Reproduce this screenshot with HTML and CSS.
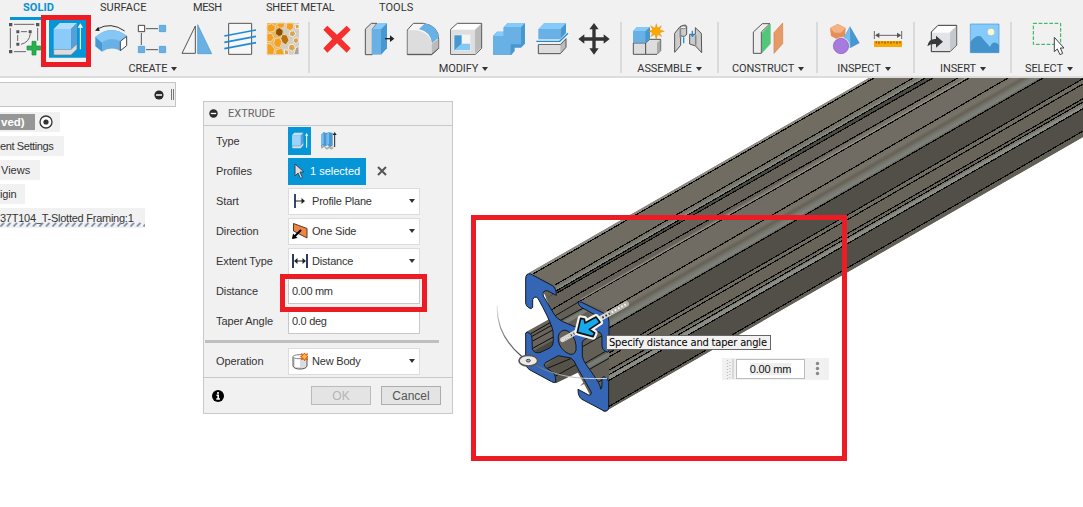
FILE: index.html
```
<!DOCTYPE html>
<html lang="en">
<head>
<meta charset="utf-8">
<title>Extrude</title>
<link rel="stylesheet" href="styles.css">
</head>
<body>
<header class="toolbar">
  <nav class="tabs">
    <span class="tab tab-active">SOLID</span><span class="tab tab-surface">SURFACE</span><span class="tab tab-mesh">MESH</span><span class="tab tab-sheet">SHEET METAL</span><span class="tab tab-tools">TOOLS</span>
  </nav>
  <div class="groups">
    <section class="group create">
      <div class="icons">
        <svg width="41" height="42" viewBox="0 60 123 126"><path d="M42 73h61M42 155h36M31 84v61M113 84v38M63 95h18M53 105v18M91 101Q88 127 63 133" fill="none" stroke="#666" stroke-width="3"/><path d="M27 69h10v10H27zM108 69h10v10h-10zM27 150h10v10H27zM49 91h9v9h-9zM86 91h9v9h-9zM49 128h9v9h-9z" fill="#555"/><path d="M96 124h12v14h14v12h-14v15H96v-15H81v-12h15z" fill="#26b14c" stroke="#17913a" stroke-width="2"/></svg>
        <svg width="50" height="42" viewBox="123 60 150 126"><path d="M147 60h111v113H147z" fill="#0696d7"/><path d="M161 148h52l18-17v17l-18 17h-52z" fill="#ddd" stroke="#777" stroke-width="2"/><path d="M161 87h52v61h-52z" fill="#8bcbfa"/><path d="M161 87l18-18h52l-18 18z" fill="#b1defd"/><path d="M213 87l18-18v62l-18 17z" fill="#559fda"/><path d="M241 148V79" stroke="#fff" stroke-width="3"/><path d="M233 83l8-13 8 13z" fill="#fff"/></svg>
        <svg width="42" height="42" viewBox="273 60 126 126"><path d="M286 111Q333 70 381 108L361 124Q332 108 306 128V155L286 139Z" fill="#4797d0"/><path d="M286 111Q333 70 381 108L361 124Q332 108 306 128Z" fill="#85c7f5"/><path d="M306 128Q332 108 361 124V152Q332 138 306 155Z" fill="#69b0e5"/><path d="M361 124l19-15v28l-19 15z" fill="#fff" stroke="#444" stroke-width="3"/><path d="M292 87Q333 64 374 93" fill="none" stroke="#333" stroke-width="3"/><path d="M285 92l10-12 4 13z" fill="#222"/></svg>
        <svg width="43" height="42" viewBox="399 60 129 126"><path d="M438 86H474M438 149H474M424 99V135" stroke="#555" stroke-width="3"/><path d="M415 76h19v19h-19z" fill="#fff" stroke="#444" stroke-width="3"/><path d="M478 76h19v19h-19zM415 139h19v19h-19zM478 139h19v19h-19z" fill="#69b0e5" stroke="#4797d0" stroke-width="2"/></svg>
        <svg width="44" height="42" viewBox="528 60 132 126"><path d="M586 78V160H546Z" fill="#f4f4f4" stroke="#555" stroke-width="3"/><path d="M593 74V161H635Z" fill="#69b0e5" stroke="#4797d0" stroke-width="2"/></svg>
        <svg width="43" height="42" viewBox="660 60 129 126"><path d="M686 70h69v93h-69z" fill="#f7f7f7" stroke="#555" stroke-width="3"/><path d="M673 108l95-18M673 127l95-18M673 146l95-18" stroke="#1c8bdd" stroke-width="5"/></svg>
        <svg width="40" height="42" viewBox="789 60 120 126"><rect x="801" y="69" width="96" height="95" fill="#d5cdc1"/><path d="M801 69h32l18 26-12 69h-38z" fill="#e9b65c"/><g fill="#f5a11d" stroke="#e9d7b8" stroke-width="3"><path d="M801 76l14-5 12 9-3 13-15 4-8-5zM833 69h22l-4 14-12 2-9-8zM861 69h18l2 13-10 10-13-7zM801 100l14 1 7 12-9 13-12-2zM824 117l14-4 8 12-5 16-13 1-7-11zM801 131l12 1 11 15-3 17h-20zM828 149l18-5 8 20h-27z"/><path d="M847 103l14 2 6 16-9 14-11-7-5-12z" fill="#b9700f"/></g><path d="M829 90l10-6 9 8-2 12-9 4-9-7z" fill="#8a4f08"/><g fill="#d9a44d" stroke="#efeeeb" stroke-width="3"><path d="M870 94l12-2 5 10-8 9-11-5zM882 115l11-2 3 10-8 8-9-6zM868 134l13-1 5 12-9 9-12-7zM853 148l11 3 3 13h-13zM885 72l12 2v11l-10 2z"/><path d="M887 143l10-4v25h-16z" fill="#aaa39a"/></g></svg>
      </div>
      <div class="label">CREATE <i></i></div>
    </section>
    <section class="group modify">
      <div class="icons">
        <svg width="43" height="42" viewBox="30 60 129 126"><path d="M67 77l-12 12 27 28-27 28 12 13 29-28 29 28 12-13-28-28 28-28-12-12-29 27z" fill="#f5302e"/></svg>
        <svg width="45" height="42" viewBox="159 60 135 126"><path d="M181 87l18-17h17l-14 17v77h-21z" fill="#ddd" stroke="#555" stroke-width="3"/><path d="M201 87h27v77h-27z" fill="#69b0e5"/><path d="M201 87l18-18h27l-18 18z" fill="#85cafa"/><path d="M228 87l18-18v76l-18 19z" fill="#4797d0"/><path d="M240 116h18" stroke="#222" stroke-width="4"/><path d="M255 106v20l13-10z" fill="#222"/></svg>
        <svg width="41" height="42" viewBox="294 60 123 126"><path d="M307 90l18-20h30q46 7 46 48v27l-21 19h-73z" fill="#f6f6f6" stroke="#555" stroke-width="3"/><path d="M308 91h27q41 8 45 42v30h-72z" fill="#ddd"/><path d="M380 132l20-16v29l-20 18z" fill="#bbb"/><path d="M342 87l18-17q39 10 41 43l-20 17q-4-35-39-43z" fill="#69b0e5"/><path d="M307 163h73l21-18" fill="none" stroke="#555" stroke-width="3"/></svg>
        <svg width="45" height="42" viewBox="417 60 135 126"><path d="M437 88l20-18h73v75l-19 18h-74z" fill="#fff" stroke="#555" stroke-width="3"/><path d="M439 89h71v72h-71z" fill="#dedede"/><path d="M510 89l18-17v72l-18 17z" fill="#bbb"/><path d="M446 104h50v49h-50z" fill="#f5f5f5"/><path d="M448 106l22 0v26l-22 20z" fill="#4797d0"/><path d="M448 151l22-20h25v20z" fill="#85c7f5"/></svg>
        <svg width="43" height="42" viewBox="552 60 129 126"><path d="M564 108l12-13h20V82l12-13h52v62l-12 12h-19v10l-10 12h-54z" fill="#4797d0"/><path d="M564 108h32V82h52v51h-31v32h-53z" fill="#69b0e5"/><path d="M596 82l12-13h52l-12 13zM564 108l12-13h20v13z" fill="#85cafa"/></svg>
        <svg width="43" height="42" viewBox="681 60 129 126"><path d="M700 87h66v31h-66z" fill="#69b0e5"/><path d="M700 87l17-18h66l-17 18z" fill="#85cafa"/><path d="M766 87l17-18v30l-17 18z" fill="#4797d0"/><path d="M694 124h70l25-24" fill="none" stroke="#1c8bdd" stroke-width="4"/><path d="M700 134h66l17-18v26l-17 19h-66z" fill="#bbb" stroke="#555" stroke-width="3"/><path d="M702 135h64v24h-64z" fill="#ddd"/></svg>
        <svg class="move" width="35" height="42" viewBox="816 60 105 126"><path d="M870 69l14 19h-9v24h24v-9l18 14-18 14v-9h-24v23h9l-14 19-14-19h9v-23h-24v9l-18-14 18-14v9h24V88h-9z" fill="#333"/></svg>
      </div>
      <div class="label">MODIFY <i></i></div>
    </section>
    <section class="group assemble">
      <div class="icons">
        <svg width="44" height="42" viewBox="12 60 132 126"><path d="M40 129h37v34H40z" fill="#ddd" stroke="#555" stroke-width="3"/><path d="M77 129l12-11h33v34l-11 11H77z" fill="#ddd" stroke="#555" stroke-width="3"/><path d="M111 129l10-10v33l-10 10z" fill="#aaa"/><path d="M39 94l12-13h39v34l-12 14H39z" fill="#4797d0"/><path d="M39 94h37v34H39z" fill="#69b0e5"/><path d="M39 94l12-13h39L76 94z" fill="#85cafa"/><path d="M109 71l4 14 11-8-5 12 14 5-14 4 6 12-12-7-4 15-5-15-12 7 6-12-13-4 13-5-6-12 13 8z" fill="#fba800" stroke="#dd7d00" stroke-width="1"/></svg>
        <svg width="44" height="42" viewBox="156 60 132 126"><path d="M176 100l16-20q18-9 20-1v23q-4 11-18 5v29l-18 21zM256 100l-18-17v20l-17 0v29l18 6 18 20z" fill="#ccc" stroke="#555" stroke-width="3"/><path d="M193 85v28M239 106v30" stroke="#888" stroke-width="5"/><path d="M203 112v18M229 92v18" stroke="#1691e5" stroke-width="4"/><path d="M224 104h11l-5 8z" fill="#1691e5"/><ellipse cx="202" cy="82" rx="8" ry="4" fill="#fff" stroke="#555" stroke-width="2"/></svg>
      </div>
      <div class="label">ASSEMBLE <i></i></div>
    </section>
    <section class="group construct">
      <div class="icons">
        <svg width="43" height="42" viewBox="379 60 129 126"><path d="M401 96l27-25h23l-26 25v64h-24z" fill="#eee" stroke="#555" stroke-width="3"/><path d="M427 98l26-27v60l-26 29z" fill="#52c77c"/><path d="M463 98l26-29v62l-26 29z" fill="#e79a66" stroke="#cf7e4b" stroke-width="2"/></svg>
      </div>
      <div class="label">CONSTRUCT <i></i></div>
    </section>
    <section class="group inspect">
      <div class="icons">
        <svg width="42" height="42" viewBox="612 60 126 126"><path d="M630 84l23-12 24 12-2 24-22 11-20-11z" fill="#e58f58"/><path d="M630 84l23-12 24 12-14 14h-20z" fill="#f5b283"/><path d="M690 79l29 50-28 15-29-15z" fill="#4797d0"/><path d="M690 79l-27 50 28 15z" fill="#74bded"/><circle cx="663" cy="138" r="26" fill="#f1f1f1"/><circle cx="663" cy="138" r="23" fill="#a77bde" stroke="#875bbf" stroke-width="2"/></svg>
        <svg class="ruler" width="40" height="42" viewBox="57 60 120 126"><path d="M73 93v24M155 93v24M80 106h69" stroke="#666" stroke-width="3"/><path d="M75 106l13-8v16zM154 106l-13-8v16z" fill="#555"/><path d="M72 123h84v18H72z" fill="#fba800"/><path d="M79 124v6M87 124v8M96 124v6M105 124v8M114 124v6M123 124v8M132 124v6M141 124v8M150 124v6" stroke="#76531d" stroke-width="3"/></svg>
      </div>
      <div class="label">INSPECT <i></i></div>
    </section>
    <section class="group insert">
      <div class="icons">
        <svg width="43" height="42" viewBox="219 60 129 126"><path d="M244 96l20-20h56v59l-20 20h-56z" fill="#fff" stroke="#333" stroke-width="3"/><path d="M246 98h54v55h-54z" fill="#e2e4e7"/><path d="M300 97l19-19v56l-19 19z" fill="#c5c8cd"/><path d="M232 139q4-24 26-22v-10l21 18-21 18v-11q-15-2-26 7z" fill="#38393d"/></svg>
        <svg width="40" height="42" viewBox="348 60 120 126"><path d="M361 72h86v86h-86z" fill="#85cafa"/><path d="M361 126q17-22 31-17l28 32q10-23 27-6v23h-86z" fill="#4292cc"/><path d="M361 72h86v86h-86z" fill="none" stroke="#4797d0" stroke-width="2"/><circle cx="423" cy="96" r="10" fill="#fff8c4"/></svg>
      </div>
      <div class="label">INSERT <i></i></div>
    </section>
    <section class="group select">
      <div class="icons">
        <svg width="44" height="42" viewBox="528 60 132 126"><path d="M550 70h82v63h-82z" fill="none" stroke="#1faf4b" stroke-width="3" stroke-dasharray="11 5"/><path d="M613 112v43l9-8 8 17 8-4-7-16h11z" fill="#fff" stroke="#444" stroke-width="3"/></svg>
      </div>
      <div class="label">SELECT <i></i></div>
    </section>
  </div>
  <div class="callout callout-tool"></div>
</header>

<main class="workspace">
  <svg class="scene" width="1083" height="429" viewBox="0 78 1083 429">
    <defs>
      <linearGradient id="fillet" gradientUnits="userSpaceOnUse" x1="1043" y1="78" x2="1034" y2="62.4">
        <stop offset="0" stop-color="#5a5850"/><stop offset=".15" stop-color="#7f837d"/><stop offset=".32" stop-color="#77786f"/><stop offset=".52" stop-color="#666157"/><stop offset=".72" stop-color="#787469"/><stop offset="1" stop-color="#706c62"/>
      </linearGradient>
      <linearGradient id="arc" x1="0" y1="0" x2="1" y2="0"><stop offset="0" stop-color="#555"/><stop offset=".45" stop-color="#b5b5b2"/><stop offset="1" stop-color="#ddd"/></linearGradient>
      <linearGradient id="arc-up" x1="0" y1="1" x2="0" y2="0"><stop offset="0" stop-color="#444"/><stop offset=".6" stop-color="#999"/><stop offset="1" stop-color="#f2f2f2"/></linearGradient>
    </defs>
    <path d="M529 273L869 78H1083V137L604 412L590 395L577 371L556 383L530 366L526 332L553 317L545 295Z" fill="#68645b"/>
    <path d="M529 273L869 78H874L533 275Z" fill="#8b8a83"/>
    <path d="M533 274L874 78H913L555 285Z" fill="#706c62"/>
    <path d="M555 285L913 78H922L556 289Z" fill="#77756a"/>
    <path d="M556 288L920 78H925L556 291Z" fill="#848780"/>
    <path d="M556 291L925 78H933L557 293L546 299Z" fill="#4c4b44"/>
    <path d="M546 299L933 78H958L580 299L565 318Z" fill="#66625a"/>
    <path d="M580 299L958 78H969L582 301Z" fill="#77756a"/>
    <path d="M581 301L969 78H1008L607 311.5Z" fill="#706c63"/>
    <path d="M603 312L1008 78H1043L609 328Z" fill="url(#fillet)"/>
    <path d="M609 328L1043 78H1083V78.7L609 353Z" fill="#524f48"/>
    <path d="M609 353L1083 78.5V84L609 357Z" fill="#6f6c63"/>
    <path d="M609 357L1083 84V99L609 372L580 386Z" fill="#68645a"/>
    <path d="M605 374L1083 102V106L605 380Z" fill="#77756c"/>
    <path d="M605 378L1083 105V109L608 381Z" fill="#8a8d86"/>
    <path d="M608 381L1083 109V132L608 408Z" fill="#524f48"/>
    <path d="M608 407L1083 131V137L604 412Z" fill="#625f57"/>
    <path d="M533 274L874 78M555 285L913 78M556 291L925 78M557 293L933 78M546 313L580 293L958 78M580 301L969 78M607 311L1008 78M609 328L1043 78M609 353L1083 78.7M609 357L1083 84M604 373L1083 98.7M605 377L1083 102M608 381L1083 108.7M608 407L1083 131" fill="none" stroke="#090909" stroke-width="1.15" shape-rendering="crispEdges"/>
    <path d="M581 299.5L966 78" stroke="#a4a195" stroke-width=".8"/>

    <!-- end profile of the T-slot extrusion, in thirds of a pixel -->
    <g transform="translate(518 265) scale(.33333)">
      <path d="M26 205L105 160L160 175L195 250L120 275L45 265Z" fill="#68645b"/>
      <path d="M37 207L105 168M42 214L108 177M44 228L108 193M44 250L108 215" stroke="#0b0b0b" stroke-width="3"/>
      <path d="M47 258L108 224L107 248L68 266Z" fill="#484640"/>
      <path d="M192 225L273 185V345L240 350L192 280Z" fill="#625f57"/>
      <path d="M192 300L273 253M206 318L273 280M192 246L252 212M240 352L255 343" stroke="#111" stroke-width="3"/>
      <path d="M194 305L273 260V276L206 313Z" fill="#777b75"/>
      <path d="M80 305L120 270L172 275L190 318L113 355Z" fill="#55524a"/>
      <path d="M88 310L160 280M113 333L178 297" stroke="#111" stroke-width="3"/>
      <path d="M120 150L175 118L180 128L222 150L190 185L140 176Z" fill="#625f57"/>
      <path d="M112 152L180 112M124 168L205 124M132 174L190 142" stroke="#111" stroke-width="3"/>
      <path d="M128 172L200 132L210 138L150 174Z" fill="#7c7e77"/>
      <path fill-rule="evenodd" fill="#3566b5" stroke="#111923" stroke-width="3" stroke-linejoin="round" d="M23 42Q23 23 38 27L103 62Q115 69 115 91L88 77Q72 76 76 93L108 147Q114 160 135 170L165 183L188 190L228 170L243 162Q244 157 234 151L190 127Q180 121 180 109L191 112L262 147Q273 154 273 170V258Q271 264 262 259Q252 254 252 243V214Q249 199 238 201L196 226Q190 232 193 246V274Q195 286 204 298L232 338Q250 364 247 372Q252 374 252 360V342Q253 332 262 337Q272 342 272 353V428Q270 441 258 438L192 403Q180 396 180 373L212 390Q222 391 219 380L176 304Q170 285 158 279L121 272L84 292Q73 300 84 308L105 323Q114 330 113 351Q110 355 101 350L36 315Q23 307 23 292V204Q26 199 35 205Q42 209 42 220L43 252Q50 269 70 261L97 248Q107 242 106 226L105 198Q101 178 75 128L60 100Q49 91 44 104V127Q41 134 32 128Q23 123 23 114Z M124 205Q137 187 156 203Q177 224 174 256Q169 273 151 266Q127 254 121 228Q119 214 124 205Z"/>
    </g>

    <!-- direction manipulator -->
    <g transform="translate(465 205) scale(.33333)">
      <path d="M293 404L484 297" stroke="#dad9d3" stroke-width="15" stroke-linecap="round"/>
      <path d="M297 403L440 322" stroke="#343434" stroke-width="6" stroke-dasharray="5 6"/>
      <path d="M440 322L484 297" stroke="#b5b3ab" stroke-width="15" stroke-linecap="round"/>
      <path d="M297 403L318 391M440 322L484 297" stroke="#f7f7f5" stroke-width="6" stroke-dasharray="5 6"/>
      <path d="M337 382L347 340L358 342L360 354L393 336L405 352L373 373L389 384L384 395Z" fill="#28b5ef" stroke="#f4f4f2" stroke-width="18" stroke-linejoin="round"/>
      <path d="M337 382L347 340L358 342L360 354L393 336L405 352L373 373L389 384L384 395Z" fill="#16a9ec" stroke="#111" stroke-width="5" stroke-linejoin="round"/>
      <path d="M172 456Q92 390 97 300" fill="none" stroke="url(#arc-up)" stroke-width="3.5"/>
      <path d="M190 467C250 508 322 525 426 520" fill="none" stroke="url(#arc)" stroke-width="3"/>
      <ellipse cx="190" cy="467" rx="28" ry="16" fill="#ebebe9" stroke="#555" stroke-width="5"/>
      <ellipse cx="190" cy="467" rx="6" ry="4" fill="#aaa" stroke="#444" stroke-width="3"/>
    </g>
  </svg>

  <aside class="browser">
    <div class="browser-head"><svg width="10" height="10" viewBox="0 0 10 10"><circle cx="5" cy="5" r="4.6" fill="#2a2a2a"/><path d="M2 5h6" stroke="#fff" stroke-width="1.5"/></svg><b class="handle"></b></div>
    <div class="node node-root"><strong>ved)</strong><svg width="14" height="14" viewBox="0 0 14 14"><circle cx="7" cy="7" r="6" fill="#fff" stroke="#333" stroke-width="1.3"/><circle cx="7" cy="7" r="2.6" fill="#333"/></svg></div>
    <div class="node node-settings">ent Settings</div>
    <div class="node node-views">Views</div>
    <div class="node node-origin">igin</div>
    <div class="node node-part">37T104_T-Slotted Framing:1<svg class="hatch" width="145" height="5"><defs><pattern id="dash" width="6.5" height="5" patternUnits="userSpaceOnUse"><path d="M.5 4.5L4 .8" stroke="#7a8aab" stroke-width="1.7"/></pattern></defs><rect width="145" height="5" fill="url(#dash)"/></svg></div>
  </aside>

  <section class="dialog">
    <div class="dialog-head"><svg width="9" height="9" viewBox="0 0 10 10"><circle cx="5" cy="5" r="4.7" fill="#2a2a2a"/><path d="M2 5h6" stroke="#fff" stroke-width="1.5"/></svg>EXTRUDE</div>
    <div class="form">
      <div class="row"><label>Type</label>
        <span class="type-on"><svg width="23" height="28" viewBox="264 97 69 84"><path d="M277 152h25l8-10v10l-8 9h-25z" fill="#ddd"/><path d="M276 122l7-8h27v32l-8 9h-26z" fill="#559fda"/><path d="M276 122h26v31h-26z" fill="#9cd3fb"/><path d="M276 122l7-8h27l-8 8z" fill="#c0e6ff"/><path d="M320 159v-37" stroke="#fff" stroke-width="3"/><path d="M315 123l5-8 5 8z" fill="#fff"/></svg></span>
        <svg class="type-thin" width="18" height="20" viewBox="360 110 54 60"><path d="M363 156l9-4 8 8 10-6 6 6 4-6v8l-6 4-5-4-9 4-8-8-8 6z" fill="#aaa"/><path d="M363 121l8-8 7 3 9-2 11 2v38l-8 4-7-5-9 3-5-4-6 5z" fill="#4797d0"/><path d="M363 121l8-7v34l-8 6zM379 120l8-6v34l-8 7z" fill="#77bbec"/><path d="M404 158v-38" stroke="#222" stroke-width="3"/><path d="M398 122l6-9 6 9z" fill="#222"/></svg>
      </div>
      <div class="row"><label>Profiles</label><span class="selected"><svg width="11" height="17" viewBox="0 0 11 17"><path d="M1 1v12l3-3 2.5 5.5 2-1L6 9h4z" fill="#ddd" stroke="#34475a"/></svg>1 selected</span><svg class="clear" width="10" height="10" viewBox="0 0 10 10"><path d="M1 1l8 8M9 1L1 9" stroke="#555" stroke-width="2"/></svg></div>
      <div class="row"><label>Start</label><span class="combo"><svg width="16" height="16" viewBox="0 0 16 16"><path d="M3 1v14" stroke="#142a50" stroke-width="1.7"/><path d="M3 8h9" stroke="#222"/><path d="M9.500 5l3.500 3-3.500 3z" fill="#222"/></svg>Profile Plane<i></i></span></div>
      <div class="row"><label>Direction</label><span class="combo"><svg width="16" height="16" viewBox="0 0 16 16"><path d="M1.500 0.500l13.500 5v9.500L1.500 8z" fill="#ef8542" stroke="#5a3a22"/><path d="M1 15l8-8" stroke="#000" stroke-width="2"/><path d="M0 16l1-5.500 4.500 4.500z" fill="#000"/></svg>One Side<i></i></span></div>
      <div class="row"><label>Extent Type</label><span class="combo"><svg width="16" height="16" viewBox="0 0 16 16"><path d="M1 1v14M15 1v14" stroke="#142a50" stroke-width="1.8"/><path d="M3 8h10" stroke="#222"/><path d="M5.500 5L2 8l3.500 3zM10.500 5L14 8l-3.500 3z" fill="#222"/></svg>Distance<i></i></span></div>
      <div class="row"><label>Distance</label><span class="field">0.00 mm</span></div>
      <div class="row"><label>Taper Angle</label><span class="field">0.0 deg</span></div>
      <hr>
      <div class="row"><label>Operation</label><span class="combo"><svg width="16" height="17" viewBox="0 0 16 17"><path d="M1 4v9q1 3 7 3t7-3V4q-7-4-14 0z" fill="#dadde0" stroke="#555"/><path d="M3 5h5v9H3z" fill="#fff"/><ellipse cx="7" cy="3.700" rx="6" ry="2" fill="#fff" stroke="#888"/><path d="M12.500 0l1 1.700 2-1-1 2 1.500 1-1.500 1 1 2-2-1-1 2-1-2-2 1 1-2-2-1 2-1-1-2 2 1z" fill="#ffbf36" stroke="#e34a0c"/></svg>New Body<i></i></span></div>
    </div>
    <div class="dialog-foot"><svg width="12" height="12" viewBox="0 0 12 12"><circle cx="6" cy="6" r="6"/><path d="M6 2v2M4.500 5.300h1.700V9M4.300 9h3.600" stroke="#fff" stroke-width="1.6" fill="none"/></svg><button class="ok" disabled>OK</button><button>Cancel</button></div>
  </section>

  <div class="callout callout-distance"></div>
  <div class="tip">Specify distance and taper angle</div>
  <div class="value"><svg width="10" height="22" viewBox="0 0 10 22"><path d="M5.500 2v19M8 4v17" stroke="#bbb" stroke-width="1.200" stroke-dasharray="1 2"/></svg><b></b><span class="value-field"><em>0.00 mm</em></span><svg width="24" height="22" viewBox="0 0 24 22"><g fill="#888"><circle cx="12.500" cy="5.500" r="1.700"/><circle cx="12.500" cy="10.500" r="1.700"/><circle cx="12.500" cy="15.500" r="1.700"/></g></svg></div>
  <div class="callout callout-model"></div>
</main>
</body>
</html>
```
FILE: styles.css
```
* { box-sizing: border-box; }
body { margin: 0; width: 1083px; height: 507px; overflow: hidden; background: #fff; color: #333; font: 11px/14px "Liberation Sans", Arial, sans-serif; }
svg { display: block; flex: none; }

.toolbar { position: relative; height: 78px; background: #f1f1f1; border-bottom: 2px solid #dcdcdc; font-family: Roboto, sans-serif; }
.tabs { display: flex; height: 20px; padding-left: 10px; }
.tab { height: 20px; line-height: 15px; white-space: nowrap; letter-spacing: .05px; }
.tab-active { width: 58px; padding-left: 13px; border-bottom: 3px solid #0696d7; color: #0a90d1; font-weight: 700; }
.tab-surface { width: 93px; margin-left: 32px; }
.tab-mesh { width: 73px; letter-spacing: -.4px; }
.tab-sheet { width: 113px; letter-spacing: -.25px; }
.groups { display: flex; height: 56px; }
.group { flex: none; height: 56px; }
.group + .group { background: linear-gradient(#dadada, #dadada) 0 2px / 2px 51px no-repeat; }
.icons { display: flex; height: 42px; }
.label { display: flex; justify-content: center; align-items: center; gap: 4px; height: 13px; line-height: 13px; letter-spacing: -.1px; }
.label i, .combo i { width: 0; height: 0; border: 3px solid transparent; border-top: 4px solid #333; border-bottom: 0; }
.create { width: 308px; }
.modify { width: 312px; padding-left: 7px; }
.modify .label { margin-left: -8px; }
.move { margin-left: 1px; }
.assemble { width: 97px; padding-left: 4px; }
.assemble .label, .create .label { margin-left: -2px; }
.construct { width: 99px; }
.construct .label { margin-left: 3px; }
.construct .icons { padding-left: 29px; }
.inspect { width: 97px; padding-left: 8px; }
.inspect .label { margin-left: -9px; }
.ruler { margin-left: 3px; }
.insert { width: 97px; padding-left: 10px; }
.insert .label { margin-left: -7px; }
.select { width: 73px; padding-left: 16px; }
.select .label { margin-left: -11px; }

.callout { position: absolute; border: 5px solid #ed1c24; }
.callout-tool { left: 41px; top: 15px; width: 50px; height: 52px; }
.callout-distance { left: 280px; top: 196px; width: 147px; height: 38px; }
.callout-model { left: 471px; top: 137px; width: 376px; height: 246px; }

.workspace { position: relative; display: flex; height: 429px; }
.scene { position: absolute; left: 0; top: 0; }
.browser { position: relative; display: flex; flex-direction: column; align-items: flex-start; gap: 4px; width: 203px; padding-top: 4px; }
.browser-head { display: flex; justify-content: flex-end; align-items: center; gap: 7px; width: 176px; height: 25px; margin-bottom: 1px; padding-right: 1px; background: #f1f1f1; border: 1px solid #c5c5c5; border-left: 0; }
.handle { width: 3px; height: 11px; border: solid #777; border-width: 0 1px; }
.node { position: relative; height: 20px; line-height: 20px; background: #f1f1f1; white-space: nowrap; }
.node-root { display: flex; align-items: center; gap: 4px; width: 60px; }
.node-root strong { width: 35px; height: 16px; padding-left: 1px; line-height: 16px; background: #969696; color: #fff; font-size: 11.5px; }
.node-settings { width: 64px; letter-spacing: -.4px; }
.node-views { width: 40px; padding-left: 1px; }
.node-origin { width: 25px; letter-spacing: -.2px; }
.node-part { width: 145px; letter-spacing: -.25px; }
.hatch { position: absolute; left: 0; bottom: 1px; }

.dialog { position: relative; width: 250px; height: 313px; margin-top: 23px; background: #f1f1f1; border: 1px solid #c8c8c8; }
.dialog-head { display: flex; align-items: center; gap: 10px; height: 24px; padding-left: 5px; border-bottom: 1px solid #c8c8c8; color: #666; font-family: Roboto, sans-serif; }
.form { height: 251px; }
.row { display: flex; align-items: center; height: 30px; padding-left: 12px; }
.row label { width: 72px; flex: none; letter-spacing: -.1px; }
.type-on { background: #0696d7; }
.type-thin { margin-left: 9px; }
.selected { display: flex; align-items: center; gap: 5px; width: 78px; height: 27px; padding-left: 6px; background: #0696d7; color: #fff; white-space: nowrap; }
.clear { margin-left: 11px; }
.combo { display: flex; align-items: center; gap: 4px; width: 132px; height: 27px; padding: 0 4px 0 3px; background: #fff; border: 1px solid #dcdcdc; letter-spacing: -.2px; }
.combo i { margin-left: auto; }
.field { width: 132px; height: 25px; padding-left: 3px; line-height: 23px; background: #fff; border: 1px solid #c8c8c8; border-top-color: #eee; letter-spacing: -.3px; }
hr { width: 234px; height: 3px; margin: 4px 0 3px 1px; border: 0; background: #bfbfbf; }
.dialog-foot { display: flex; align-items: center; gap: 10px; height: 36px; padding-left: 8px; border-top: 1px solid #c8c8c8; }
.dialog-foot svg { margin-right: 77px; }
button { width: 60px; height: 19px; padding: 0; background: #e4e4e4; border: 1px solid #adadad; color: #555; font: 12px/16px "Liberation Sans", Arial, sans-serif; }
.ok { color: #b5b5b5; border-color: #bbb; }

.tip { position: absolute; left: 606px; top: 257px; width: 165px; height: 15px; padding-left: 2px; background: #f2f2f2; border: 1px solid #666; color: #000; font: 11px/13px "DejaVu Sans Condensed", "Noto Sans", sans-serif; letter-spacing: -.16px; white-space: nowrap; }
.value { position: absolute; left: 722px; top: 280px; display: flex; align-items: center; width: 107px; height: 22px; background: #f1f1f1; color: #111; }
.value b { width: 2px; height: 20px; margin-right: 2px; background: #d8d8d8; }
.value-field { width: 69px; height: 20px; border: 1px solid #bdbdbd; background: #fff; text-align: center; line-height: 18px; letter-spacing: -.2px; }
.value em { font-style: normal; background: #eee; }
```
